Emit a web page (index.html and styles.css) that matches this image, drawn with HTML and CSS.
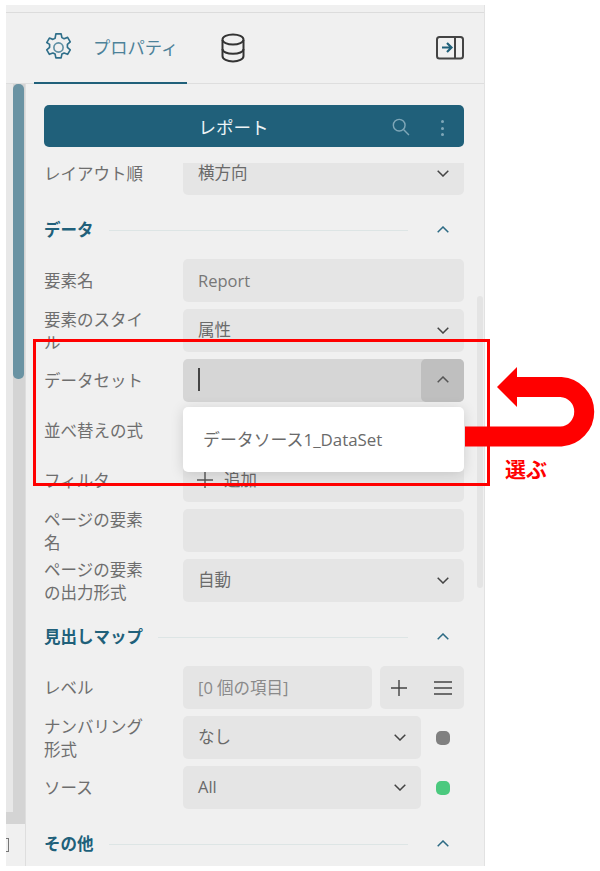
FILE: index.html
```html
<!DOCTYPE html>
<html lang="ja">
<head>
<meta charset="utf-8">
<title>プロパティ</title>
<link rel="stylesheet" href="styles.css">
</head>
<body>
<div class="panel">
  <div class="strip"></div>
  <header class="head">
    <div class="tab">
      <svg class="gear" viewBox="2.500 0.800 23 26.400" fill="none" stroke="#2f6f8a" stroke-width="1.500" stroke-linejoin="round"><path d="M11.600 1.600h4.800l.7 3.400 2 1 3.200-1.200 2.400 4.100-2.600 2.300v2.600l2.600 2.300-2.400 4.100-3.200-1.200-2 1-.7 3.400h-4.800l-.7-3.400-2-1-3.200 1.200-2.400-4.100 2.600-2.300v-2.600L3.300 9.500l2.400-4.100 3.200 1.200 2-1z"/><circle cx="14" cy="14" r="4.200" stroke="#5d8ea2"/></svg>
      <span class="tab-text">プロパティ</span>
    </div>
    <svg class="db" viewBox="0 0 24 30" fill="none" stroke="#333" stroke-width="2"><path d="M1.500 7v16c0 3.200 4.700 5.500 10.500 5.500s10.500-2.300 10.500-5.500V7"/><ellipse cx="12" cy="6.500" rx="10.500" ry="5"/><path d="M1.500 16c0 3 4.700 4.800 10.500 4.800S22.500 19 22.500 16"/></svg>
    <svg class="collapse" viewBox="0 0 28 24" fill="none"><rect x="1" y="1" width="26" height="21.500" rx="2.500" stroke="#444" stroke-width="2"/><path d="M19 1v21.500" stroke="#444" stroke-width="2"/><path d="M6 11.500h9M11 7l4.500 4.500L11 16" stroke="#20607a" stroke-width="2.200"/></svg>
  </header>
  <div class="body">
    <div class="rail"><div class="track"><div class="thumb"></div></div><div class="hbar"></div><span class="sliver"></span></div>
    <main class="main">
      <div class="titlebar">
        <span class="titlebar-text">レポート</span>
        <svg class="search" viewBox="0 0 20 20" fill="none" stroke="#7fa7b8" stroke-width="1.600"><circle cx="8" cy="8" r="6.500"/><path d="M12.800 12.800l6 6"/></svg>
        <span class="dots"><i></i><i></i><i></i></span>
      </div>

      <div class="row row-clip">
        <span class="lbl">レイアウト順</span>
        <div class="ctl ctl-clip"><span class="val">横方向</span><svg class="chev" viewBox="0 0 12 7"><path d="M.7.700 6 6l5.300-5.300"/></svg></div>
      </div>

      <div class="sec"><span class="sec-t">データ</span><span class="sec-l"></span><svg class="chev chev-up" viewBox="0 0 12 7"><path d="M.7 6.300 6 1l5.300 5.300"/></svg></div>
      <div class="rows">
        <div class="row"><span class="lbl">要素名</span><div class="ctl"><span class="val val-soft">Report</span></div></div>
        <div class="row"><span class="lbl">要素のスタイル</span><div class="ctl"><span class="val">属性</span><svg class="chev" viewBox="0 0 12 7"><path d="M.7.700 6 6l5.300-5.300"/></svg></div></div>
        <div class="row"><span class="lbl">データセット</span><div class="ctl ctl-focus"><span class="caret"></span><span class="open-btn"><svg class="chev chev-open" viewBox="0 0 12 7"><path d="M.7 6.300 6 1l5.300 5.300"/></svg></span></div></div>
        <div class="row"><span class="lbl">並べ替えの式</span><div class="ctl"></div></div>
        <div class="row"><span class="lbl">フィルタ</span><div class="ctl"><svg class="plus-s" viewBox="0 0 16 16"><path d="M8 0v16M0 8h16"/></svg><span class="val add">追加</span></div></div>
        <div class="row"><span class="lbl">ページの要素名</span><div class="ctl"></div></div>
        <div class="row"><span class="lbl">ページの要素の出力形式</span><div class="ctl"><span class="val">自動</span><svg class="chev" viewBox="0 0 12 7"><path d="M.7.700 6 6l5.300-5.300"/></svg></div></div>
      </div>

      <div class="sec"><span class="sec-t">見出しマップ</span><span class="sec-l"></span><svg class="chev chev-up" viewBox="0 0 12 7"><path d="M.7 6.300 6 1l5.300 5.300"/></svg></div>
      <div class="rows">
        <div class="row">
          <span class="lbl">レベル</span>
          <div class="split">
            <div class="ctl"><span class="val val-faint">[0 個の項目]</span></div>
            <div class="btns">
              <svg class="plus" viewBox="0 0 16 16"><path d="M8 0v16M0 8h16"/></svg>
              <svg class="menu" viewBox="0 0 18 14"><path d="M0 1h18M0 7h18M0 13h18"/></svg>
            </div>
          </div>
        </div>
        <div class="row">
          <span class="lbl">ナンバリング形式</span>
          <div class="with-dot"><div class="ctl"><span class="val">なし</span><svg class="chev" viewBox="0 0 12 7"><path d="M.7.700 6 6l5.300-5.300"/></svg></div><span class="dot dot-gray"></span></div>
        </div>
        <div class="row">
          <span class="lbl">ソース</span>
          <div class="with-dot"><div class="ctl"><span class="val">All</span><svg class="chev" viewBox="0 0 12 7"><path d="M.7.700 6 6l5.300-5.300"/></svg></div><span class="dot dot-green"></span></div>
        </div>
      </div>

      <div class="sec"><span class="sec-t">その他</span><span class="sec-l"></span><svg class="chev chev-up" viewBox="0 0 12 7"><path d="M.7 6.300 6 1l5.300 5.300"/></svg></div>

      <div class="vscroll"></div>
    </main>
  </div>
</div>

<div class="menu-pop"><span>データソース1_DataSet</span></div>
<div class="redbox"></div>
<svg class="arrow" viewBox="0 0 140 90" fill="none"><path d="M0 69.500H96A24.800 24.800 0 0 0 96 20H50" stroke="#f00" stroke-width="20"/><path d="M32 20 52 0v40z" fill="#f00"/></svg>
<span class="note">選ぶ</span>
</body>
</html>
```
FILE: styles.css
```css
* { box-sizing: border-box; }
html, body { margin: 0; padding: 0; background: #fff; }
body {
  font-family: "Open Sans", "Noto Sans CJK JP", sans-serif;
  font-size: 16.5px;
  color: #6e6e6e;
  height: 871px;
  overflow: hidden;
  position: relative;
}
.panel {
  margin: 5px 0 0 6px;
  width: 479px;
  height: 861px;
  background: #f0f0f0;
  border-right: 1px solid #e2e2e2;
  display: flex;
  flex-direction: column;
}
.strip { height: 8px; border-bottom: 1px solid #dcdcdc; flex: none; }
.head {
  height: 71px;
  flex: none;
  border-bottom: 1px solid #dedede;
  display: flex;
  align-items: center;
  padding-left: 28px;
  padding-right: 20px;
  position: relative;
}
.tab {
  width: 153px;
  height: 71px;
  margin-bottom: -1px;
  border-bottom: 2px solid #20607a;
  display: flex;
  align-items: center;
  padding-left: 11px;
  flex: none;
}
.gear { width: 27px; height: 29px; flex: none; }
.tab-text { margin-left: 21px; font-size: 17.3px; color: #4d8299; line-height: 22px; white-space: nowrap; }
.db { width: 24px; height: 30px; margin-left: 34px; flex: none; }
.collapse { width: 28px; height: 24px; margin-left: auto; flex: none; }

.body { flex: 1; display: flex; min-height: 0; }
.rail { width: 19px; flex: none; position: relative; display: flex; flex-direction: column; }
.track {
  height: 728px;
  background: #e8e8e8;
  padding-left: 7px;
  position: relative;
  flex: none;
}
.track::after { content: ""; position: absolute; left: 7px; right: 0; top: 0; bottom: 0; background: #d4d4d4; }
.thumb {
  position: relative;
  z-index: 1;
  width: 11px;
  height: 295px;
  background: #6a93a3;
  border-radius: 5px;
}
.hbar { height: 12px; background: #d4d4d4; flex: none; }
.sliver {
  position: absolute;
  left: 0;
  top: 754px;
  width: 3px;
  height: 14px;
  border: 1px solid #777;
  border-left: 0;
}
.main {
  flex: 1;
  min-width: 0;
  border-left: 1px solid #dedede;
  padding: 21px 20px 0 18px;
  overflow: hidden;
  position: relative;
}
.titlebar {
  height: 42px;
  border-radius: 5px;
  background: #20607a;
  display: flex;
  align-items: center;
  color: #fff;
}
.titlebar-text { flex: 1; text-align: center; font-size: 17.5px; margin-right: 41px; color: #eef4f6; }
.search { width: 18px; height: 18px; position: absolute; left: 366px; top: 34px; }
.dots { position: absolute; left: 415px; top: 36px; display: flex; flex-direction: column; gap: 3.500px; }
.dots i { width: 3px; height: 3px; border-radius: 50%; background: #7fa7b8; }

.row { display: flex; align-items: center; height: 43px; }
.row-clip { height: 32px; margin-top: 16px; align-items: flex-start; }
.row-clip .lbl { line-height: 21px; }
.lbl { width: 139px; flex: none; line-height: 23px; padding-right: 36px; color: #6e6e6e; }
.ctl {
  flex: 1;
  min-width: 0;
  height: 43px;
  background: #e5e5e5;
  border-radius: 5px;
  display: flex;
  align-items: center;
  padding: 0 15px;
  position: relative;
}
.ctl-clip { height: 32px; border-radius: 0 0 5px 5px; padding-bottom: 11px; }
.val { color: #6a6a6a; flex: 1; line-height: 22px; padding-bottom: 2px; white-space: nowrap; }
.val-soft { color: #777; padding-bottom: 0; }
.val-faint { color: #8a8a8a; padding-bottom: 0; }
.add { margin-left: 11px; }
.chev { width: 12px; height: 7px; flex: none; fill: none; stroke: #444; stroke-width: 1.500; }
.chev-up { stroke: #2c6a84; margin-left: 29px; margin-right: 15px; margin-bottom: 2px; }
.ctl-focus { background: #d6d6d6; padding-right: 0; }
.caret { width: 2px; height: 23px; background: #444; margin-bottom: 2px; }
.open-btn {
  margin-left: auto;
  width: 43px;
  height: 43px;
  background: #bfbfbf;
  border-radius: 5px;
  display: flex;
  align-items: center;
  justify-content: center;
}
.chev-open { stroke: #555; margin-bottom: 2px; }
.plus-s { width: 16px; height: 16px; fill: none; stroke: #555; stroke-width: 1.400; flex: none; margin-left: -1px; margin-bottom: 2px; }
.rows { display: flex; flex-direction: column; gap: 7px; margin-top: 19px; }
.sec { height: 20px; margin-top: 25px; display: flex; align-items: center; }
.sec-t { color: #20607a; font-weight: 700; line-height: 20px; white-space: nowrap; flex: none; }
.sec-l { flex: 1; height: 1px; background: #dde5e5; margin-left: 15px; }
.sec-t + .sec-l { min-width: 0; }
.split { flex: 1; display: flex; gap: 8px; min-width: 0; }
.btns {
  width: 84px;
  height: 43px;
  flex: none;
  background: #e5e5e5;
  border-radius: 5px;
  display: flex;
  align-items: center;
  justify-content: space-between;
  padding: 0 12px;
}
.plus { width: 16px; height: 16px; fill: none; stroke: #444; stroke-width: 1.400; margin-left: -1px; }
.menu { width: 18px; height: 14px; fill: none; stroke: #444; stroke-width: 1.500; }
.with-dot { flex: 1; display: flex; align-items: center; min-width: 0; }
.dot { width: 14px; height: 14px; border-radius: 5px; margin-left: 15px; margin-right: 14px; flex: none; }
.dot-gray { background: #808080; }
.dot-green { background: #4bc97e; }
.vscroll {
  position: absolute;
  left: 451px;
  top: 212px;
  width: 6px;
  height: 292px;
  border-radius: 3px;
  background: #e4e4e4;
}
.menu-pop {
  position: absolute;
  left: 183px;
  top: 407px;
  width: 281px;
  height: 65px;
  background: #fff;
  border-radius: 5px;
  box-shadow: 0 2px 14px rgba(0,0,0,.14);
  display: flex;
  align-items: center;
  padding: 0 0 2px 20px;
  font-size: 16.9px;
  color: #6a6a6a;
}
.redbox {
  position: absolute;
  left: 33px;
  top: 339px;
  width: 457px;
  height: 147px;
  border: 3px solid #f00;
}
.arrow { position: absolute; left: 465px; top: 367px; width: 140px; height: 90px; }
.note { position: absolute; left: 505px; top: 456px; color: #f00; font-size: 21px; font-weight: 700; line-height: 26px; }
```
